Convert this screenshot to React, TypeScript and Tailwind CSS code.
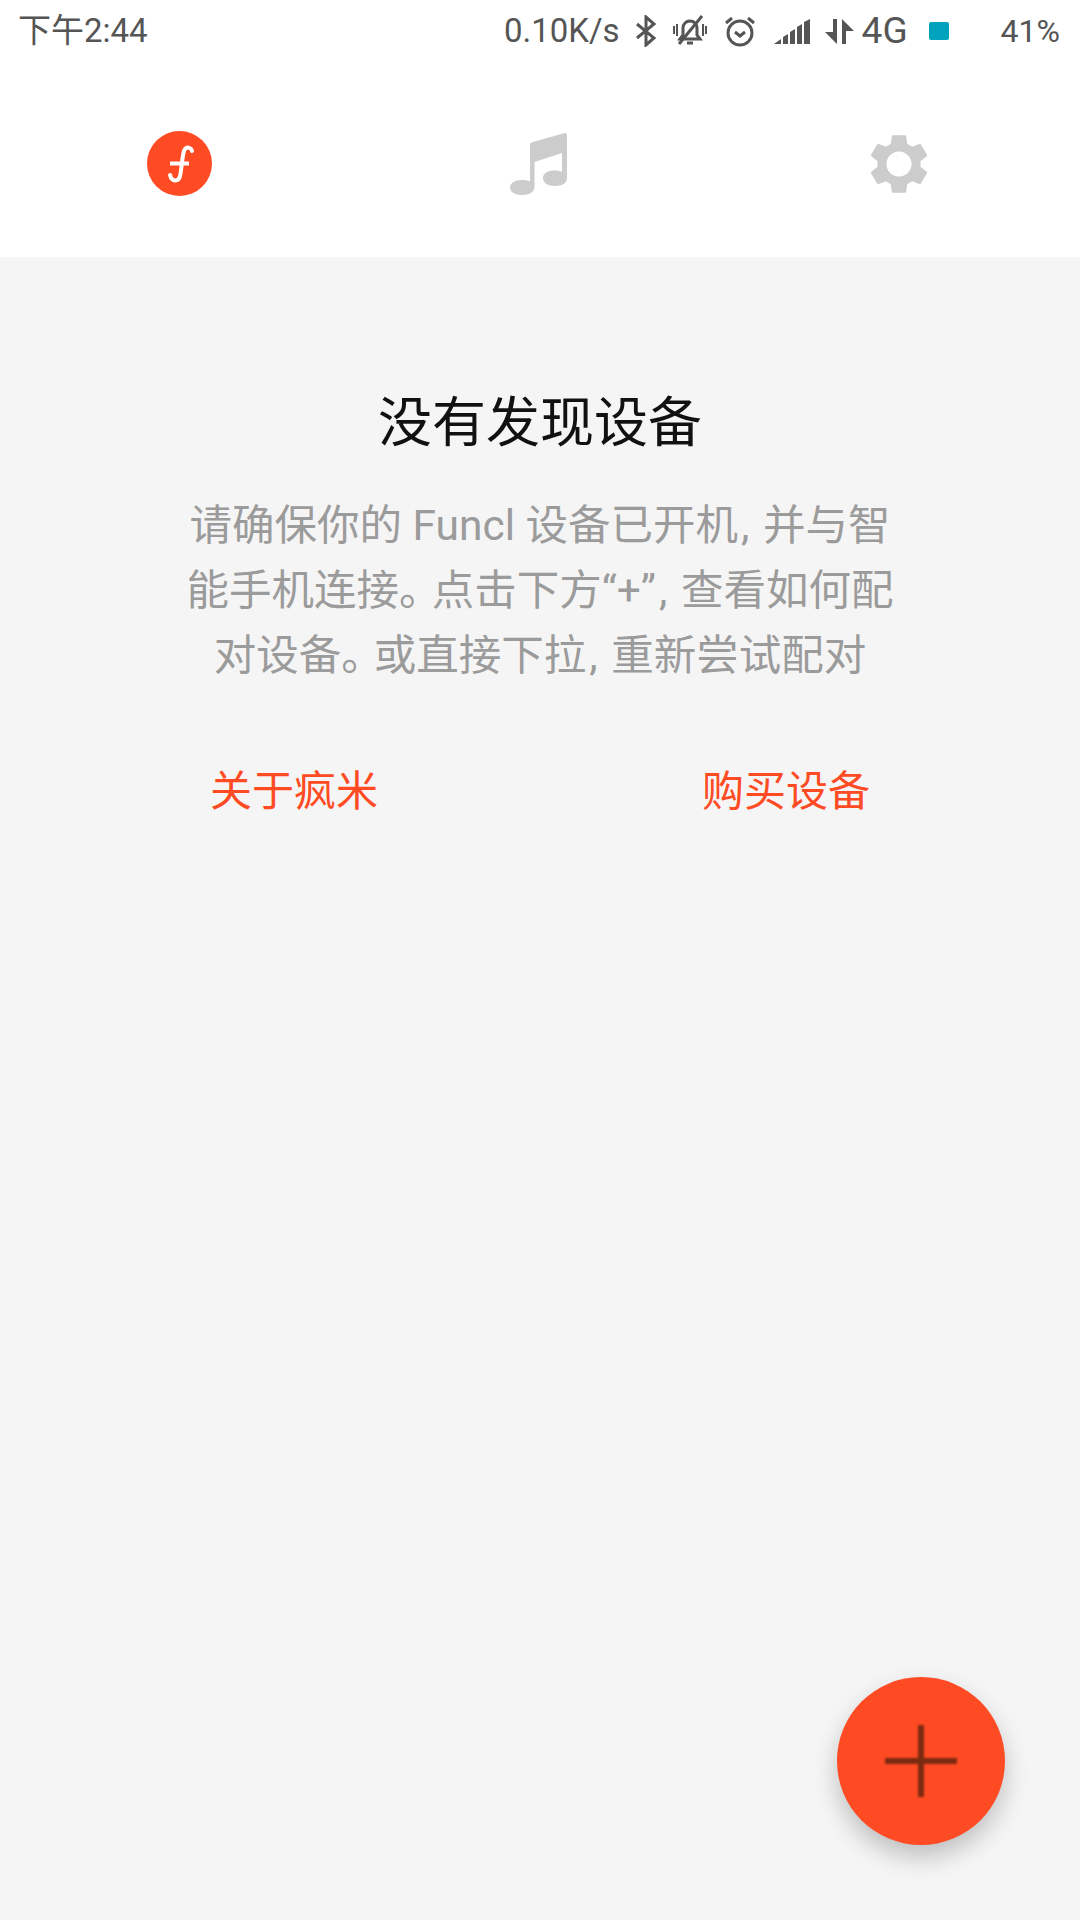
const font = 'font-["Roboto","Noto_Sans_CJK_SC",sans-serif]'

function StatusIcons() {
  return (
    <div className="flex items-center">
      <svg width="20" height="32" viewBox="0 0 20 32" fill="none" stroke="#555" strokeWidth="3" className="ml-[16px]">
        <path d="M1 9l17 14-8 7V2l8 7L1 23" />
      </svg>
      <svg width="34" height="32" viewBox="0 0 34 32" fill="none" stroke="#555" strokeWidth="3" className="ml-[17px]">
        <path d="M7 24h20l-3-4v-7c0-4-3-7-7-7s-7 3-7 7v7z" />
        <path d="M14 28h6" />
        <path d="M29 1L6 29" />
        <path d="M1 11v8M4 9v12M30 9v12M33 11v8" strokeWidth="2" />
      </svg>
      <svg width="32" height="32" viewBox="0 0 32 32" fill="none" stroke="#555" strokeWidth="3" className="ml-[17px]">
        <circle cx="16" cy="18" r="12" />
        <path d="M11 17l5 4 5-4" />
        <path d="M2 8l6-5M30 8l-6-5" />
      </svg>
      <svg width="37" height="25" viewBox="0 0 37 25" fill="#555" className="ml-[18px]">
        <path d="M0 25l7-5v5zM9 18l5-3v10H9zM16 13l5-3v15h-5zM23 8l5-3v20h-5zM30 3l6-3v25h-6z" />
      </svg>
      <svg width="29" height="25" viewBox="0 0 29 25" fill="#555" className="ml-[14px]">
        <path d="M8 0h4v25L0 13h8zM17 0l12 12h-8v13h-4z" />
      </svg>
    </div>
  )
}

function MusicNote() {
  return (
    <svg width="58" height="62" viewBox="0 0 58 62" fill="#ccc">
      <path d="M20 12c0-1.500.7-2.300 2-2.800L54 .2C56-.3 57 .7 57 2.500V45c0 5-4.500 8-12 8-7 0-12-3-12-8s5-7.500 12-7.500c3 0 5 .5 7 1.500V20L24.500 29V54c0 5-5 8-12.500 8C5 62 0 59 0 54.500S5 47 12 47c3 0 6 .5 8 1.500z" />
    </svg>
  )
}

function Gear() {
  return (
    <svg width="72" height="72" viewBox="0 0 24 24" fill="#ccc">
      <path d="M19.140 12.940c.04-.3.06-.61.06-.94 0-.32-.02-.64-.07-.94l2.030-1.580c.18-.14.23-.41.12-.61l-1.920-3.320c-.12-.22-.37-.29-.59-.22l-2.390.96c-.5-.38-1.030-.7-1.620-.94l-.36-2.540c-.04-.24-.24-.41-.48-.41h-3.840c-.24 0-.43.17-.47.41l-.36 2.540c-.59.24-1.130.57-1.620.94l-2.390-.96c-.22-.08-.47 0-.59.22L2.740 8.870c-.12.21-.08.47.12.61l2.030 1.580c-.05.3-.09.63-.09.94s.02.64.07.94l-2.030 1.580c-.18.14-.23.41-.12.61l1.920 3.320c.12.22.37.29.59.22l2.390-.96c.5.38 1.030.7 1.620.94l.36 2.540c.05.24.24.41.48.41h3.840c.24 0 .44-.17.47-.41l.36-2.540c.59-.24 1.130-.56 1.620-.94l2.390.96c.22.08.47 0 .59-.22l1.920-3.320c.12-.22.07-.47-.12-.61l-2.010-1.580zM12 16.200c-2.320 0-4.200-1.880-4.200-4.200s1.880-4.200 4.200-4.200 4.200 1.880 4.200 4.200-1.880 4.200-4.200 4.200z" />
    </svg>
  )
}

function Logo() {
  return (
    <svg width="65" height="65" viewBox="0 0 65 65">
      <circle cx="32.500" cy="32.500" r="32.500" fill="#ff4b23" />
      <path d="M45 20c-1-4-6-5-8 0-2 6-2 16-4 25-1 5-6 6-9 2-.5-1-.5-2-1-3" fill="none" stroke="#fff" strokeWidth="4" strokeLinecap="round" />
      <path d="M23 32.500h19" fill="none" stroke="#fff" strokeWidth="4" />
    </svg>
  )
}

function Stop() {
  return <span className="tracking-[-10px]">。</span>
}

function Comma() {
  return <span className="mx-[3px]">,</span>
}

export default function App() {
  return (
    <div className={`relative flex h-[1920px] w-[1080px] flex-col overflow-hidden bg-[#f5f5f5] ${font}`}>
      <div className="bg-white">
        <div className="flex h-[62px] items-center pl-[18px] pr-[20px] text-[33px] text-[#555]">
          <span>下午2:44</span>
          <span className="ml-auto">0.10K/s</span>
          <StatusIcons />
          <span className="ml-[8px] text-[37px]">4G</span>
          <span className="ml-[21px] h-[18px] w-[20px] rounded-[2px] bg-[#00a3bb]" />
          <span className="ml-[52px] text-[32px]">41%</span>
        </div>
        <nav className="grid h-[195px] grid-cols-3 pt-[8px]">
          <div className="flex items-center justify-center pr-[2px]">
            <Logo />
          </div>
          <div className="flex items-center justify-center pr-[2px]">
            <MusicNote />
          </div>
          <div className="flex items-center justify-center pr-[2px]">
            <Gear />
          </div>
        </nav>
      </div>

      <main className="flex flex-col items-center pt-[132px]">
        <h1 className="text-[54px] leading-[70px] text-[#111]">没有发现设备</h1>
        <p className="mt-[34px] w-[760px] text-center text-[42.5px] leading-[65px] text-[#9b9b9b]">
          请确保你的 Funcl 设备已开机<Comma /> 并与智
          <br />
          能手机连接<Stop />点击下方“+”<Comma /> 查看如何配
          <br />
          对设备<Stop />或直接下拉<Comma /> 重新尝试配对
        </p>
        <div className="mt-[74px] flex w-full justify-between px-[210px] text-[42px] leading-[60px] text-[#ff4b23]">
          <span>关于疯米</span>
          <span>购买设备</span>
        </div>
      </main>

      <button className="absolute bottom-[75px] right-[75px] flex h-[168px] w-[168px] items-center justify-center rounded-full bg-[#ff4b23] shadow-[0_12px_24px_rgba(0,0,0,0.22)]">
        <svg width="72" height="72" viewBox="0 0 72 72" className="blur-[0.8px]" fill="#7a2a10">
          <path d="M33 0h6v33h33v6H39v33h-6V39H0v-6h33z" />
        </svg>
      </button>
    </div>
  )
}
